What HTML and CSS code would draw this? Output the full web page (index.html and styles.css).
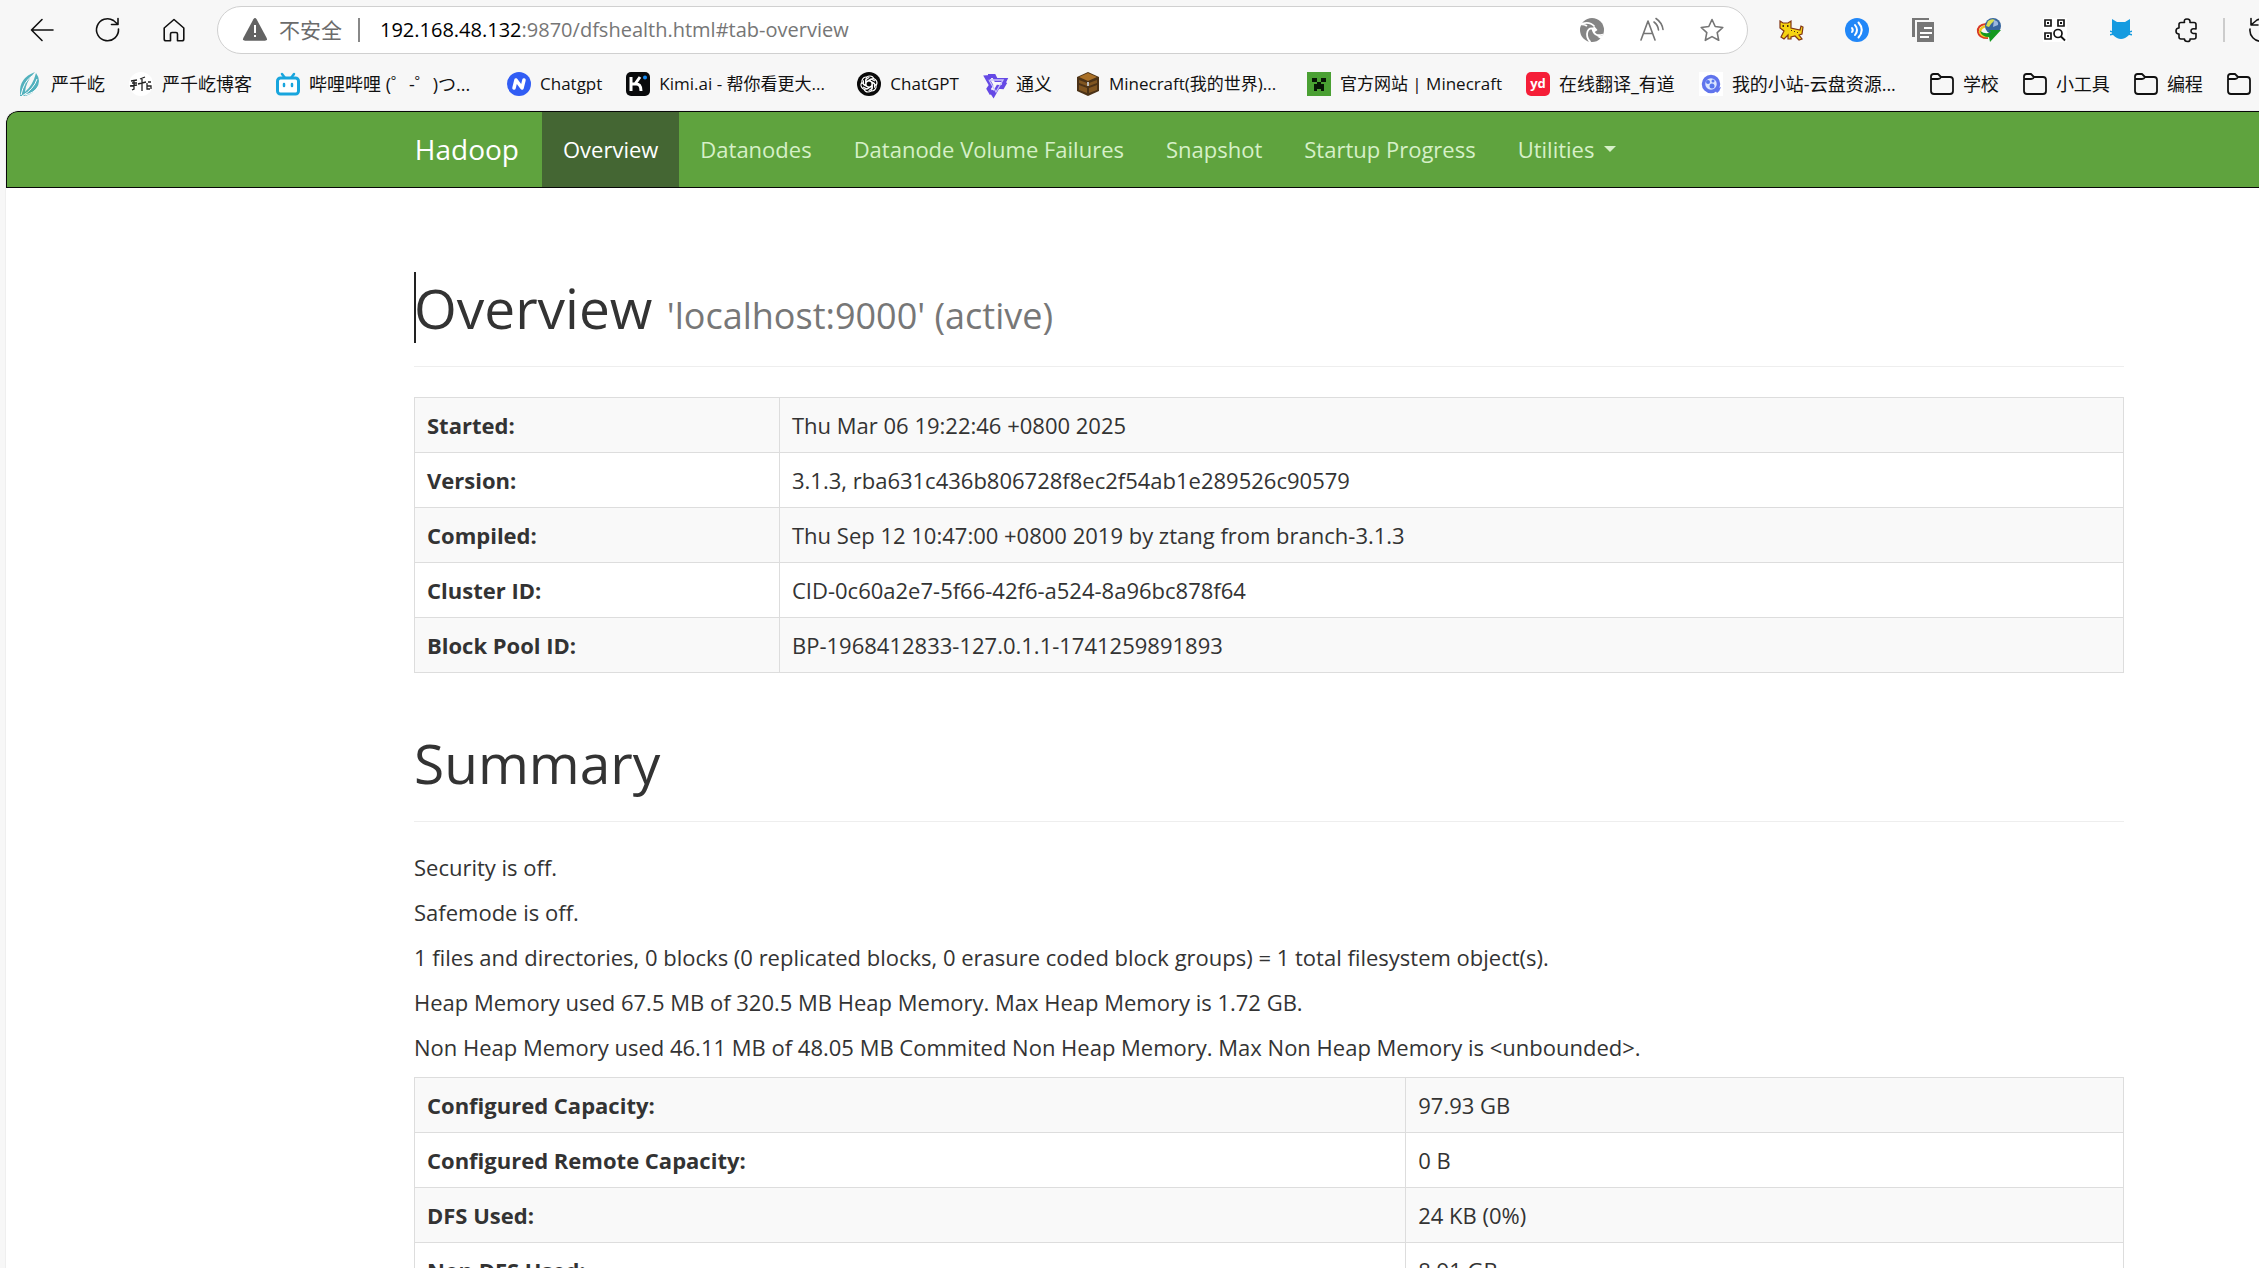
FILE: index.html
```
<!DOCTYPE html>
<html lang="zh-CN">
<head>
<meta charset="utf-8">
<meta name="viewport" content="width=device-width, initial-scale=1">
<title>Namenode information</title>
<link rel="stylesheet" href="styles.css">
</head>
<body>
<header class="browser">
  <div class="toolbar">
    <div class="tools">
      <button class="tool" type="button" aria-label="Back"><svg class="icon" viewBox="0 0 24 24"><path class="line" d="M23 12H1.500M12 1.500 1.500 12 12 22.500"/></svg></button>
      <button class="tool" type="button" aria-label="Refresh"><svg class="icon" viewBox="0 0 24 24"><path class="line" d="M22.500 11A11 11 0 1 1 17.500 2.500L21.500 6M22 .5V6.500H15.500"/></svg></button>
      <button class="tool" type="button" aria-label="Home"><svg class="icon" viewBox="0 0 24 24"><path class="line" d="M12 1.500 2.200 10V21q0 1.800 1.800 1.800H8.500V16q0-1.500 1.500-1.500h4q1.500 0 1.500 1.500v6.800H20q1.800 0 1.800-1.800V10Z"/></svg></button>
    </div>
    <div class="address">
      <svg class="icon" viewBox="0 0 24 24"><path fill="#636363" d="M10.400 1.200q1.600-2.400 3.200 0L23.700 20q1 2.700-1.800 2.700H2.100Q-.7 22.700.3 20Z"/><path fill="#fff" d="M11 7h2v8h-2zM11 17h2v2h-2z"/></svg>
      <span class="insecure">不安全</span>
      <span class="address-rule"></span>
      <a class="url" href="#tab-overview"><span class="host">192.168.48.132</span>:9870/dfshealth.html#tab-overview</a>
      <div class="address-actions">
        <button class="inner-tool" type="button" aria-label="Switch mode"><svg class="icon" viewBox="0 0 24 24"><circle cx="12" cy="12" r="12" fill="#858585"/><path fill="none" stroke="#fff" stroke-width="1.800" d="M0 6.500Q9 2.500 14.500 8.500M23 16.500Q14 19.500 12.500 10.500Q7.500 10 7 16Q7 21 10.500 24M0 6.500Q4 6 7 8"/><path fill="#fff" d="M14.500 8.500 17.500 12 14 14.500 12 10.500ZM24 17l-3 4-4-2.500z"/></svg></button>
        <button class="inner-tool" type="button" aria-label="Read aloud"><svg class="icon" viewBox="0 0 24 24"><path class="line grey" d="M1 22 8 3l7 19M3.500 15.500h9M14 4q4 3 4.500 8M16 .5q6 4 7 11"/></svg></button>
        <button class="inner-tool" type="button" aria-label="Add to favourites"><svg class="icon" viewBox="0 0 24 24"><path class="line grey" d="m12 1.500 3.200 7 7.600 1-5.600 5.200 1.500 7.600L12 18.600l-6.700 3.700 1.500-7.600L1.200 9.500l7.600-1Z"/></svg></button>
      </div>
    </div>
    <div class="tools extensions">
      <button class="tool" type="button" aria-label="Cat extension"><svg class="icon" viewBox="0 0 24 24"><path fill="#f5d312" stroke="#803414" stroke-width="1.200" d="M1 3l3 2h5l3-2v7l9 2 1-4 2 1-1 7-3 1 3 4-3 1-4-4-4 1v2H9v-4l-4 4-3-2 3-6-4-3Z"/><path fill="#4b2c0d" d="M3.500 7h1.500v2H3.500zM8 7h1.500v2H8zM12 12h1v1h-1zM15 13h1v1h-1zM18 14h1v1h-1z"/></svg></button>
      <button class="tool" type="button" aria-label="Voice extension"><svg class="icon" viewBox="0 0 24 24"><circle cx="12" cy="12" r="12" fill="#2187f8"/><path fill="none" stroke="#fff" stroke-width="2" stroke-linecap="round" d="M7 10q1.500 2 0 4M10 7q4 5 0 10M13.500 4.500q6.500 7.500 0 15"/></svg></button>
      <button class="tool" type="button" aria-label="Copy extension"><svg class="icon" viewBox="0 0 24 24"><path fill="#777" d="M1 0h17v2H4v17H1zM6 4h17v20H6z"/><path fill="#fff" d="M13 9h8v2h-8zM9 14h12v2H9zM9 18h9v2H9z"/></svg></button>
      <button class="tool" type="button" aria-label="Download manager"><svg class="icon" viewBox="0 0 24 24"><path fill="none" stroke="#d93823" stroke-width="2" d="M9 6Q0 7 1 14q1 6 10 6"/><path fill="none" stroke="#edc51f" stroke-width="2.500" d="M10 8Q3 9 3 14q2 5 9 4"/><circle cx="16" cy="8" r="8" fill="#36659e"/><path fill="#d8df50" d="M11 3q4-3 7-1l-4 4-2 3-3-1z"/><path fill="#9bb8df" d="M17 2q5 1 4 5l-5 2z"/><path fill="#159a20" d="M3 13q6 4 11 1l-2-2 12 0-11 12-1-5q-7 0-9-6Z"/></svg></button>
      <button class="tool" type="button" aria-label="QR code extension"><svg class="icon" viewBox="0 0 24 24"><path fill="#fff" d="M0 0h24v24H0z"/><path fill="none" stroke="#161616" stroke-width="1.700" d="M2 2h6v6H2zM15 2h6v6h-6zM2 15h6v6H2z"/><path fill="#111" d="M4 4h2v2H4zM17 4h2v2h-2zM4 17h2v2H4z"/><circle cx="15" cy="15.500" r="4" fill="none" stroke="#111" stroke-width="1.700"/><path stroke="#111" stroke-width="1.800" d="m18 18.500 4 4"/></svg></button>
      <button class="tool" type="button" aria-label="Blue cat extension"><svg class="icon" viewBox="0 0 24 24"><path fill="#159be0" d="m3 1 5 3h8l5-3v12l2-.5v1.500l-2 .5v1l2 .5v1.500l-3-.5q-8 8-16 0l-3 .5V16l2-.5v-1L1 14v-1.500l2 .5Z"/></svg></button>
      <button class="tool" type="button" aria-label="Extensions"><svg class="icon" viewBox="0 0 24 24"><path class="line" d="M6 4.500h3.500Q8.500 1 12 1t3 3.500H19q2 0 2 2V11q-5-1-5 2t5 2.500V19q0 2-2 2h-4q.5 2.500-2.500 2.500T9.500 21H6q-2 0-2-2v-3q-3 0-3-3t3-3V6.500q0-2 2-2Z"/></svg></button>
      <span class="tools-rule"></span>
      <button class="tool clipped" type="button" aria-label="History"><svg class="icon" viewBox="0 0 24 24"><path class="line" d="M2 .5V7h7M2.500 6.500 8 2M1 11a11 11 0 1 0 7-9"/></svg></button>
    </div>
  </div>
  <nav class="bookmarks" aria-label="Bookmarks">
    <a class="bookmark" href="#b1"><svg class="icon" viewBox="0 0 24 24"><path fill="#52b1bd" d="M2 21Q1 6 17 0q-9 9-10 20Q15 13 18 1q6 8 0 16-6 8-16 7Z"/><path fill="none" stroke="#fff" stroke-width="1" d="M3 23Q6 9 14 4M4 24Q16 17 19 7M7 23q9-2 13-8"/></svg><span>严千屹</span></a>
    <a class="bookmark" href="#b2"><svg class="icon" viewBox="0 0 24 24"><circle cx="12" cy="12" r="12" fill="#fff"/><path fill="none" stroke="#222" stroke-width="1.300" d="M2 9l6-1M3 11h5M1 14l7-1M5 8v9l-2 1M11 7l5-2M9 12l8-2M13 6v13M18 11v6h3M19 10h3M18 14h4v3"/></svg><span>严千屹博客</span></a>
    <a class="bookmark" href="#b3"><svg class="icon" viewBox="0 0 24 24"><path stroke="#18a5dd" stroke-width="2.500" stroke-linecap="round" d="m6 2 3 4m9-4-3 4"/><rect x="1.500" y="6" width="21" height="16" rx="3" fill="#fff" stroke="#18a5dd" stroke-width="3"/><path stroke="#18a5dd" stroke-width="2.500" stroke-linecap="round" d="M8 12v2m8-2v2"/></svg><span class="long">哔哩哔哩 (゜-゜)つ...</span></a>
    <a class="bookmark latin" href="#b4"><svg class="icon" viewBox="0 0 24 24"><circle cx="12" cy="12" r="12" fill="#315df4"/><path fill="none" stroke="#fff" stroke-width="3.500" stroke-linecap="round" stroke-linejoin="round" d="m7 16 2-8 6 8 2-8"/></svg><span>Chatgpt</span></a>
    <a class="bookmark latin" href="#b5"><svg class="icon" viewBox="0 0 24 24"><rect width="24" height="24" rx="5" fill="#090a0c"/><path fill="none" stroke="#fff" stroke-width="3" d="M5 5v14M14 5l-5 7H5m4 0q6-1 6 7"/><circle cx="19" cy="5.500" r="2" fill="#168cf5"/></svg><span class="long">Kimi.ai - 帮你看更大...</span></a>
    <a class="bookmark latin" href="#b6"><svg class="icon" viewBox="0 0 24 24"><circle cx="12" cy="12" r="12" fill="#090909"/><g fill="none" stroke="#fff" stroke-width="1.100"><path id="petal" d="M9 14V8q0-4 4-4 3 0 4 3M9 10l5-3 4 2"/><use href="#petal" transform="rotate(60 12 12)"/><use href="#petal" transform="rotate(120 12 12)"/><use href="#petal" transform="rotate(180 12 12)"/><use href="#petal" transform="rotate(240 12 12)"/><use href="#petal" transform="rotate(300 12 12)"/></g></svg><span>ChatGPT</span></a>
    <a class="bookmark" href="#b7"><svg class="icon" viewBox="0 0 24 24"><g fill="none" stroke="#6549e5" stroke-width="4"><path id="arm" d="M5 4h6l2 4h9l-2 4"/><use href="#arm" transform="rotate(120 12 12)"/><use href="#arm" transform="rotate(240 12 12)"/></g><path fill="none" stroke="#c9c2fc" stroke-width="1.300" d="M7 8h13L13 20 6 8"/></svg><span>通义</span></a>
    <a class="bookmark latin" href="#b8"><svg class="icon" viewBox="0 0 24 24"><path fill="#4b3217" d="m12 0 11 5v14l-11 5L1 19V5Z"/><path fill="#a97027" d="m12 1 9 4-9 4-9-4Z"/><path fill="#805521" d="m3 8 8 3v3l-8-3zM13 11l8-3v3l-8 3zM3 13l8 3v5l-8-3zM13 16l8-3v5l-8 3z"/><path fill="#bbb" d="M11 10h2v4h-2z"/></svg><span class="long">Minecraft(我的世界)...</span></a>
    <a class="bookmark latin" href="#b9"><svg class="icon" viewBox="0 0 24 24"><path fill="#4aa033" d="M0 0h24v24H0z"/><path fill="#071506" d="M5 6h5v4H5zM14 6h5v4h-5zM10 10h4v2h3v7h-3v-2h-4v2H7v-7h3z"/></svg><span>官方网站 | Minecraft</span></a>
    <a class="bookmark" href="#b10"><svg class="icon" viewBox="0 0 24 24"><rect width="24" height="24" rx="5" fill="#f51e38"/><text class="youdao" x="12" y="16" text-anchor="middle">yd</text></svg><span>在线翻译_有道</span></a>
    <a class="bookmark" href="#b11"><svg class="icon" viewBox="0 0 24 24"><path fill="#fff" d="M0 0h24v24H0z"/><circle cx="12" cy="12" r="7.500" fill="#dce6ff" stroke="#6074ed" stroke-width="3.500"/><path fill="#6074ed" d="m16 18 6-3q-1 4-4 6z"/><g fill="#5877ed"><circle cx="9" cy="10" r="2"/><circle cx="14" cy="9" r="1.500"/><circle cx="13" cy="14" r="2.500"/></g></svg><span class="long">我的小站-云盘资源...</span></a>
    <a class="bookmark" href="#b12"><svg class="icon" viewBox="0 0 24 24"><path class="line folder" d="M1 6V4.500Q1 2 3.500 2H8l3 3h9q3 0 3 3v11q0 3-3 3H4q-3 0-3-3V7h7q2 0 3-2"/></svg><span>学校</span></a>
    <a class="bookmark" href="#b13"><svg class="icon" viewBox="0 0 24 24"><path class="line folder" d="M1 6V4.500Q1 2 3.500 2H8l3 3h9q3 0 3 3v11q0 3-3 3H4q-3 0-3-3V7h7q2 0 3-2"/></svg><span>小工具</span></a>
    <a class="bookmark" href="#b14"><svg class="icon" viewBox="0 0 24 24"><path class="line folder" d="M1 6V4.500Q1 2 3.500 2H8l3 3h9q3 0 3 3v11q0 3-3 3H4q-3 0-3-3V7h7q2 0 3-2"/></svg><span>编程</span></a>
    <a class="bookmark" href="#b15" aria-label="More bookmarks"><svg class="icon" viewBox="0 0 24 24"><path class="line folder" d="M1 6V4.500Q1 2 3.500 2H8l3 3h9q3 0 3 3v11q0 3-3 3H4q-3 0-3-3V7h7q2 0 3-2"/></svg></a>
  </nav>
</header>
<div class="viewport" lang="en">
  <nav class="navbar page-grid" aria-label="Hadoop">
    <div class="nav-items">
      <a class="brand" href="#top">Hadoop</a>
      <a class="nav-link active" href="#tab-overview">Overview</a>
      <a class="nav-link" href="#tab-datanode">Datanodes</a>
      <a class="nav-link" href="#tab-volume-failures">Datanode Volume Failures</a>
      <a class="nav-link" href="#tab-snapshot">Snapshot</a>
      <a class="nav-link" href="#tab-startup-progress">Startup Progress</a>
      <button class="nav-link" type="button">Utilities <span class="caret"></span></button>
    </div>
  </nav>
  <main class="page-grid">
    <div class="content" id="tab-overview">
      <div class="page-header"><h1 class="focused">Overview <small>'localhost:9000' (active)</small></h1></div>
      <table class="data-table overview-table">
        <tr><th scope="row">Started:</th><td>Thu Mar 06 19:22:46 +0800 2025</td></tr>
        <tr><th scope="row">Version:</th><td>3.1.3, rba631c436b806728f8ec2f54ab1e289526c90579</td></tr>
        <tr><th scope="row">Compiled:</th><td>Thu Sep 12 10:47:00 +0800 2019 by ztang from branch-3.1.3</td></tr>
        <tr><th scope="row">Cluster ID:</th><td>CID-0c60a2e7-5f66-42f6-a524-8a96bc878f64</td></tr>
        <tr><th scope="row">Block Pool ID:</th><td>BP-1968412833-127.0.1.1-1741259891893</td></tr>
      </table>
      <div class="page-header"><h1>Summary</h1></div>
      <p>Security is off.</p>
      <p>Safemode is off.</p>
      <p>1 files and directories, 0 blocks (0 replicated blocks, 0 erasure coded block groups) = 1 total filesystem object(s).</p>
      <p>Heap Memory used 67.5 MB of 320.5 MB Heap Memory. Max Heap Memory is 1.72 GB.</p>
      <p>Non Heap Memory used 46.11 MB of 48.05 MB Commited Non Heap Memory. Max Non Heap Memory is &lt;unbounded&gt;.</p>
      <table class="data-table summary-table">
        <tr><th scope="row">Configured Capacity:</th><td>97.93 GB</td></tr>
        <tr><th scope="row">Configured Remote Capacity:</th><td>0 B</td></tr>
        <tr><th scope="row">DFS Used:</th><td>24 KB (0%)</td></tr>
        <tr><th scope="row">Non DFS Used:</th><td>8.91 GB</td></tr>
      </table>
    </div>
  </main>
</div>
</body>
</html>
```
FILE: styles.css
```
* { box-sizing: border-box; }

html, body { height: 100%; }

body {
  display: flex;
  flex-direction: column;
  margin: 0;
  overflow: hidden;
  background: #f7f7f7;
  color: #333;
  font: 22px/30px "Open Sans", "Noto Sans CJK SC", sans-serif;
}

a { color: inherit; text-decoration: none; }

button {
  padding: 0;
  border: 0;
  background: none;
  color: inherit;
  font: inherit;
}

/* Browser chrome */
.browser { flex: none; overflow: hidden; }

.icon { flex: none; display: block; width: 24px; height: 24px; overflow: visible; }

.line {
  fill: none;
  stroke: #111;
  stroke-width: 1.6;
  stroke-linecap: round;
  stroke-linejoin: round;
}
.grey { stroke: #757575; }

.toolbar {
  display: flex;
  align-items: center;
  gap: 10px;
  height: 60px;
  padding-left: 9px;
}

.tools { display: flex; flex: none; align-items: center; }
.extensions { width: 501px; overflow: hidden; }

.tool {
  display: flex;
  flex: none;
  align-items: center;
  justify-content: center;
  width: 66px;
  height: 48px;
}

.tools-rule { flex: none; width: 2px; height: 24px; margin-left: 3px; background: #ccc; }
.clipped { margin-left: 3px; }

.address {
  display: flex;
  flex: 1;
  align-items: center;
  min-width: 0;
  height: 48px;
  padding: 0 23px 0 25px;
  border: 1px solid #d0d0d0;
  border-radius: 24px;
  background: #fff;
}

.insecure { margin-left: 12px; color: #6b6b6b; font-size: 21px; }
.address-rule { width: 2px; height: 24px; margin: 0 20px 0 16px; background: #888; }
.url { color: #767676; font-size: 20px; white-space: nowrap; }
.host { color: #000; }
.address-actions { display: flex; gap: 36px; margin-left: auto; }

.bookmarks {
  display: flex;
  gap: 24px;
  height: 51px;
  padding: 0 0 3px 18px;
  color: #111;
  font-size: 18px;
}

.bookmark { display: flex; flex: none; align-items: center; gap: 9px; white-space: nowrap; }
.latin { font-size: 17px; }
.long { width: 174px; }
.folder { stroke-width: 1.8; }
.youdao { fill: #fff; font: 700 13px "Open Sans", sans-serif; }

/* Page */
.viewport {
  flex: 1;
  min-height: 0;
  margin-left: 6px;
  overflow: hidden;
  border-radius: 12px 0 0;
  background: #fff;
  box-shadow: 0 0 1px #aaa;
}

.page-grid {
  display: grid;
  grid-template-columns: minmax(0, 408fr) minmax(0, 1710fr) minmax(0, 135fr);
}
.page-grid > * { grid-column: 2; }

.navbar {
  border: solid #080808;
  border-width: 1px 0 1px 1px;
  border-radius: 12px 0 0;
  background: #5fa33e;
  color: #d6f0c8;
}

.nav-items { display: flex; white-space: nowrap; }

.brand { padding: 22px 23px 23px 0; color: #fff; font-size: 28px; }

.nav-link { display: flex; align-items: center; padding: 22px 21px 23px; }
.active { background: #446633; color: #fff; }

.caret {
  margin-left: 10px;
  border-top: 6px solid;
  border-right: 6px solid transparent;
  border-left: 6px solid transparent;
}

.page-header {
  margin: 60px 0 30px;
  padding-bottom: 14px;
  border-bottom: 1px solid #eee;
}

.content > .page-header:first-child { margin-top: 90px; }

h1 { margin: 0 0 15px; font-size: 55px; font-weight: 400; line-height: 59px; }
.focused { position: relative; }
.focused::before {
  content: "";
  position: absolute;
  top: -6px;
  left: 0;
  width: 2px;
  height: 71px;
  background: #222;
}

small { color: #777; font-size: 36px; line-height: 1; }

p { margin: 0 0 15px; }

.data-table {
  width: 100%;
  margin-bottom: 30px;
  border-collapse: collapse;
  table-layout: fixed;
}
th, td { padding: 12px; border: 1px solid #ddd; text-align: left; }
tr:nth-child(odd) { background: #f9f9f9; }
.overview-table th { width: 365px; }
.summary-table th { width: 58%; }
```
